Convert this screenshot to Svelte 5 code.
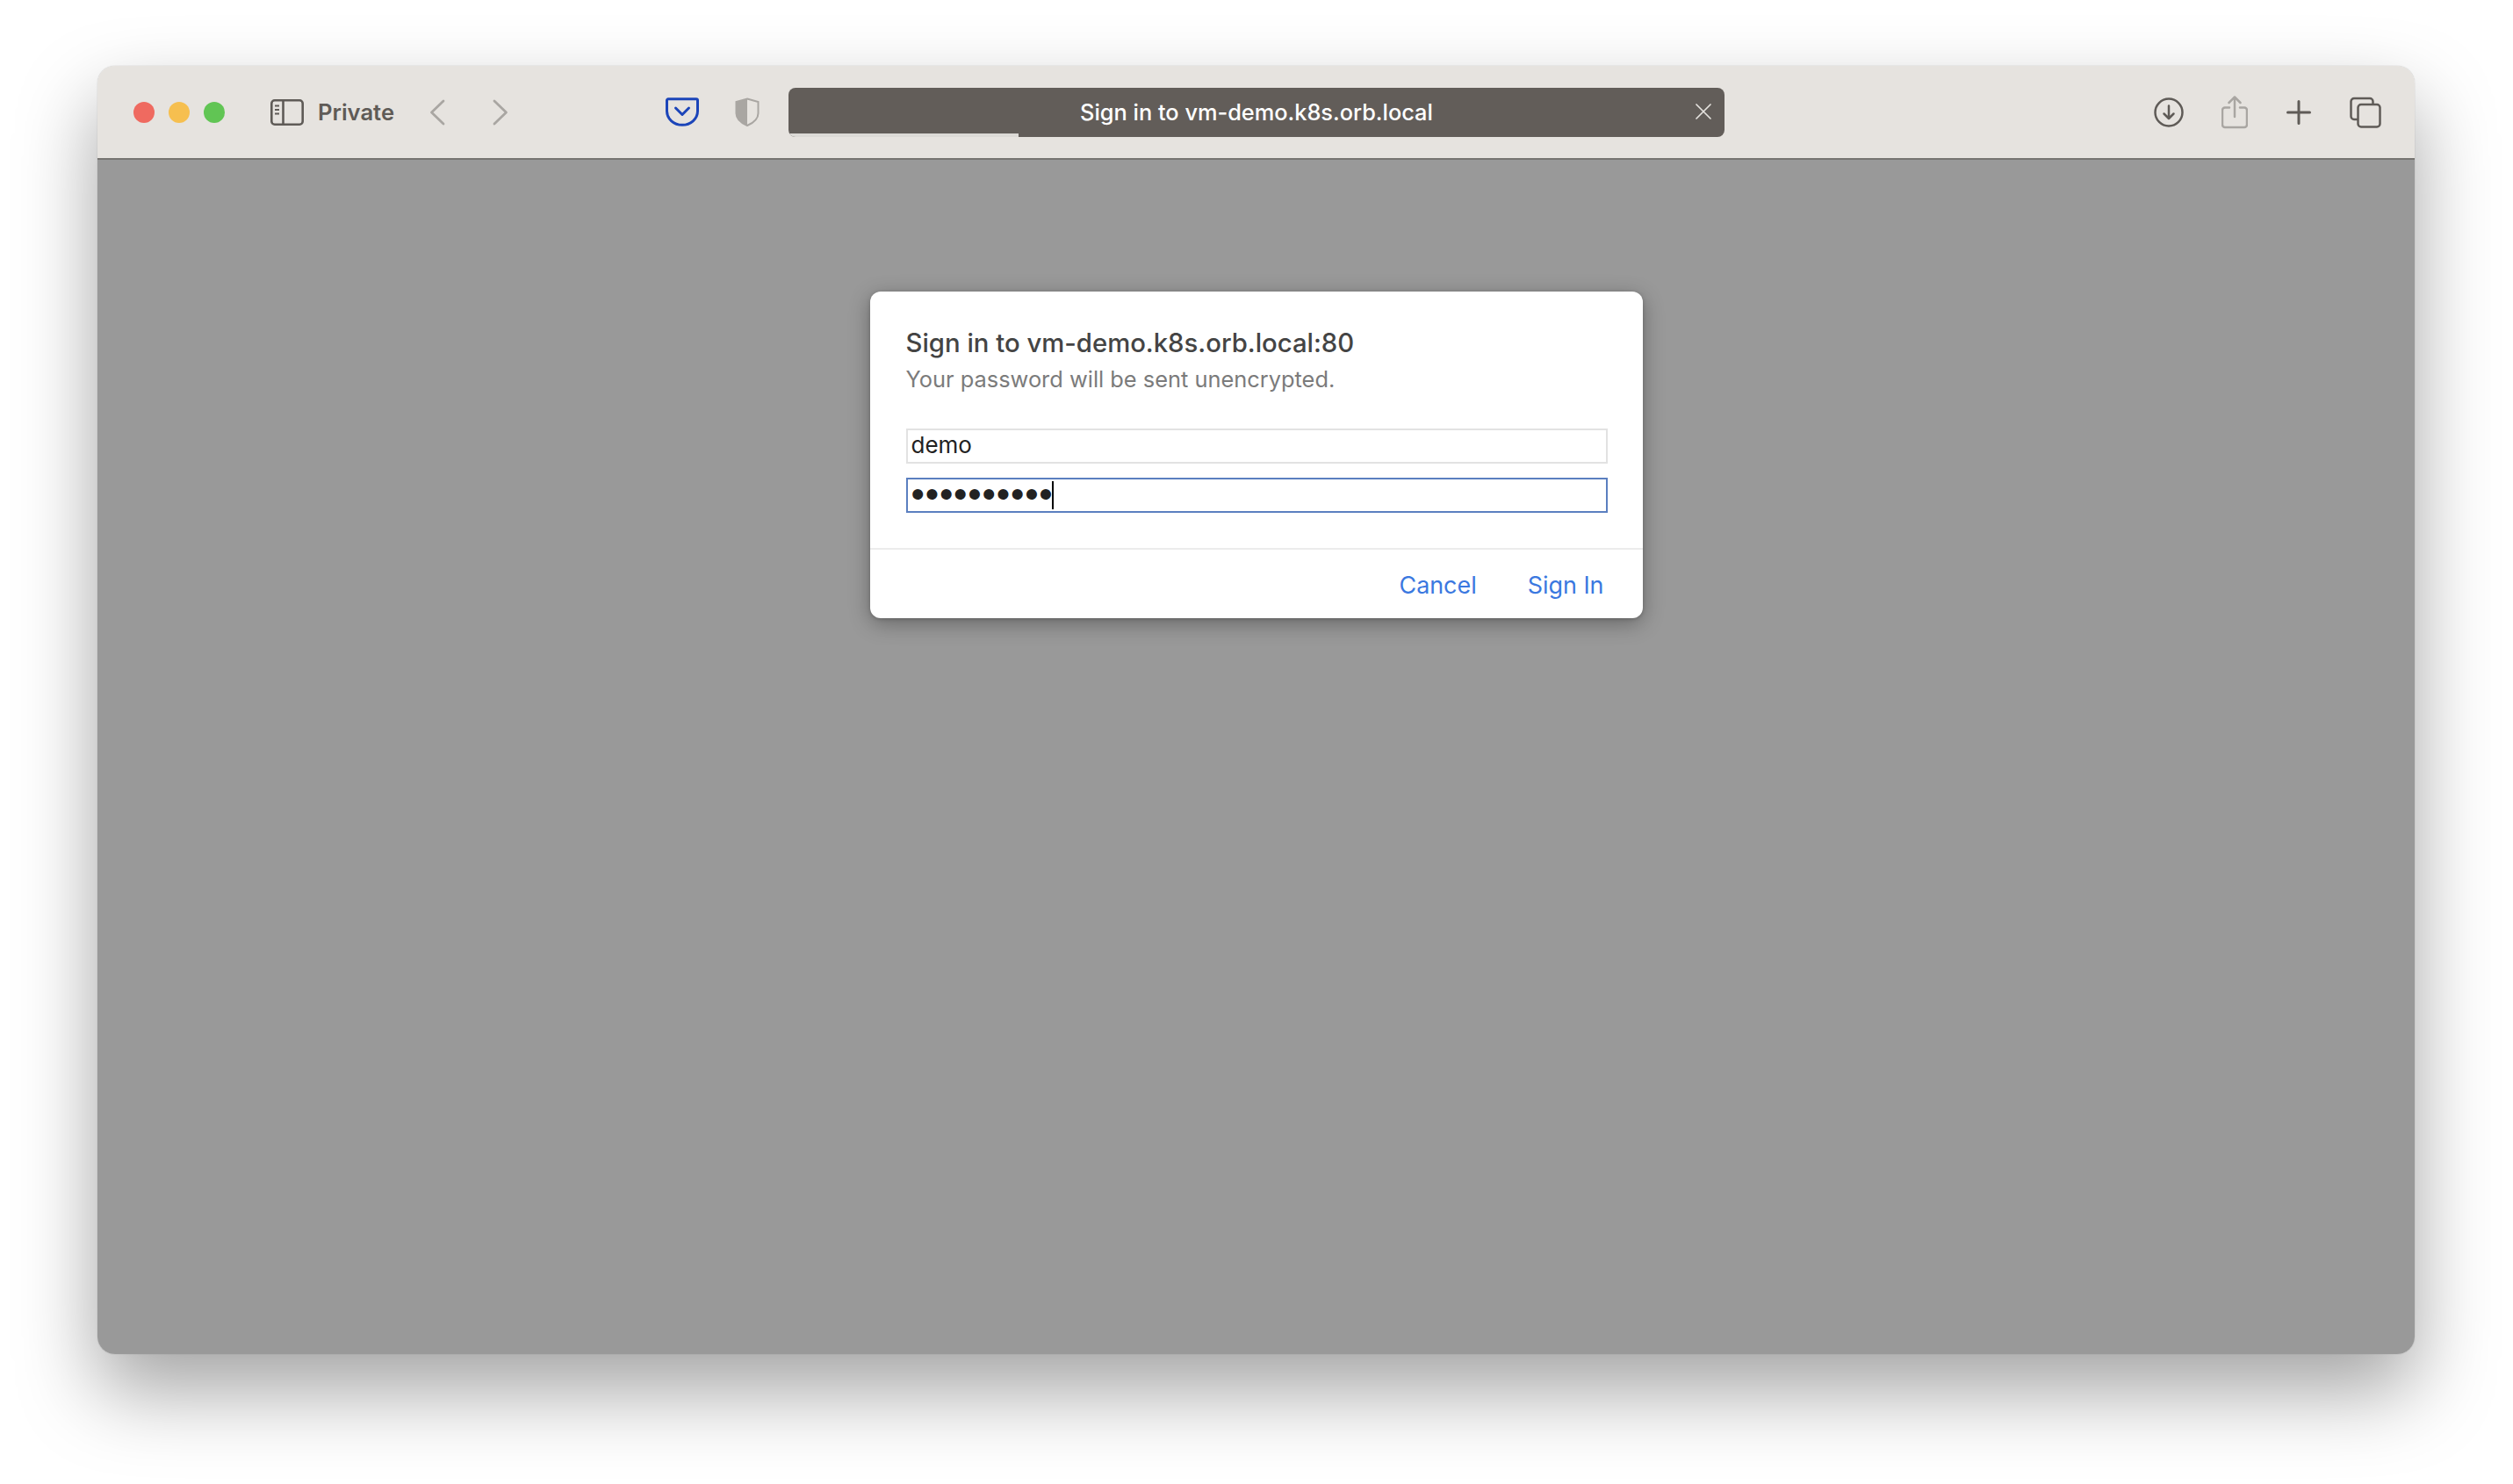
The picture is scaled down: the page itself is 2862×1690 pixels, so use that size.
<script lang="ts">
  const dots = "••••••••••";
</script>

<div class="stage">
  <div class="window">
    <header class="toolbar">
      <div class="lights">
        <span class="light red"></span>
        <span class="light yellow"></span>
        <span class="light green"></span>
      </div>

      <svg class="sidebar-icon" width="38" height="30" viewBox="0 0 38 30" fill="none" stroke="#5f5b57" stroke-width="2.6">
        <rect x="1.3" y="1.3" width="35.4" height="27.4" rx="3.5" />
        <path d="M14.5 1.3v27.4" />
        <path d="M5 7.5h5M5 12h5M5 16.5h5" stroke-width="2" />
      </svg>
      <span class="private">Private</span>

      <svg class="back" width="18" height="30" viewBox="0 0 18 30" fill="none" stroke="#a9a6a2" stroke-width="2.8" stroke-linecap="round" stroke-linejoin="round">
        <path d="M16 2 2.5 15 16 28" />
      </svg>
      <svg class="forward" width="18" height="30" viewBox="0 0 18 30" fill="none" stroke="#a9a6a2" stroke-width="2.8" stroke-linecap="round" stroke-linejoin="round">
        <path d="M2 2l13.500 13L2 28" />
      </svg>

      <svg class="pocket" width="38" height="33" viewBox="0 0 38 33" fill="none" stroke="#1c45b9" stroke-width="3">
        <path d="M3 1.800h32a1.500 1.500 0 0 1 1.500 1.500v12.200C36.500 24.500 28.500 31.300 19 31.300S1.500 24.500 1.500 15.500V3.300A1.500 1.500 0 0 1 3 1.800Z" />
        <path d="m11.500 12 7.500 7.500 7.500-7.500" stroke-linecap="round" stroke-linejoin="round" />
      </svg>
      <svg class="shield" width="28" height="33" viewBox="0 0 28 33" fill="none">
        <path d="M14 1.500 26.500 5v13c0 6.500-5.500 11-12.500 14C7 29 1.500 24.500 1.500 18V5Z" stroke="#a9a6a2" stroke-width="2" />
        <path d="M14 1.500 1.500 5v13C1.500 24.500 7 29 14 32Z" fill="#a9a6a2" />
      </svg>

      <div class="url-bar">
        <span class="url-title">Sign in to vm-demo.k8s.orb.local</span>
        <span class="url-progress"></span>
        <svg class="url-close" width="20" height="20" viewBox="0 0 20 20" stroke="#e6e3df" stroke-width="1.700" stroke-linecap="round">
          <path d="M2 2l16 16M18 2 2 18" />
        </svg>
      </div>

      <svg class="download" width="34" height="34" viewBox="0 0 34 34" fill="none" stroke="#5f5b57" stroke-width="2.500" stroke-linecap="round" stroke-linejoin="round">
        <circle cx="17" cy="17" r="15.500" />
        <path d="M17 9.500v14M11.500 18.500l5.500 5.500 5.500-5.500" />
      </svg>
      <svg class="share" width="30" height="38" viewBox="0 0 30 38" fill="none" stroke="#a9a6a2" stroke-width="2.500" stroke-linecap="round" stroke-linejoin="round">
        <path d="M9 13.500H4a3 3 0 0 0-3 3V33a3 3 0 0 0 3 3h22a3 3 0 0 0 3-3V16.500a3 3 0 0 0-3-3h-5" />
        <path d="M15 24V2M8.500 8 15 1.500 21.500 8" />
      </svg>
      <svg class="plus" width="28" height="28" viewBox="0 0 28 28" stroke="#5f5b57" stroke-width="3" stroke-linecap="round">
        <path d="M14 1.500v25M1.500 14h25" />
      </svg>
      <svg class="tabs" width="36" height="36" viewBox="0 0 36 36" fill="none" stroke="#5f5b57" stroke-width="2.500">
        <rect x="9.500" y="9" width="25" height="25.500" rx="3.500" />
        <path d="M9.500 26H5a3.500 3.500 0 0 1-3.500-3.500v-17A3.500 3.500 0 0 1 5 2h18a3.500 3.500 0 0 1 3.500 3.500V9" />
      </svg>
    </header>

    <main class="content">
      <div class="dialog">
        <div class="dialog-body">
          <div class="dialog-title">Sign in to vm-demo.k8s.orb.local:80</div>
          <div class="dialog-note">Your password will be sent unencrypted.</div>
          <div class="field first">demo</div>
          <div class="field focused">
            <span class="dots">{dots}</span><span class="caret"></span>
          </div>
        </div>
        <div class="dialog-actions">
          <span class="action">Cancel</span>
          <span class="action">Sign In</span>
        </div>
      </div>
    </main>
  </div>
</div>

<style>
  :global(body) {
    margin: 0;
    background: #fff;
  }
  .stage {
    box-sizing: border-box;
    width: 2862px;
    height: 1690px;
    padding: 75px 112px 148px 111px;
    overflow: hidden;
    font-family: Inter, "Liberation Sans", sans-serif;
  }
  .window {
    display: flex;
    flex-direction: column;
    height: 100%;
    border-radius: 20px;
    overflow: hidden;
    box-shadow: 0 0 1px rgba(0, 0, 0, 0.4), 0 42px 90px rgba(0, 0, 0, 0.36);
  }
  .toolbar {
    box-sizing: border-box;
    display: flex;
    align-items: center;
    flex: none;
    height: 107px;
    background: #e6e3df;
    border-bottom: 2px solid #767471;
  }
  .lights {
    display: flex;
    gap: 16px;
    margin-left: 41px;
  }
  .light {
    width: 24px;
    height: 24px;
    border-radius: 50%;
  }
  .red {
    background: #ef6a60;
  }
  .yellow {
    background: #f6bf4f;
  }
  .green {
    background: #61c554;
  }
  .toolbar svg {
    flex: none;
  }
  .sidebar-icon {
    margin-left: 52px;
  }
  .private {
    width: 88px;
    margin-left: 16px;
    font-size: 25.6px;
    font-weight: 600;
    color: #5f5b57;
    white-space: nowrap;
  }
  .back {
    margin-left: 39px;
  }
  .forward {
    margin-left: 54px;
  }
  .pocket {
    margin-left: 179px;
  }
  .shield {
    margin-left: 41px;
  }
  .url-bar {
    position: relative;
    display: flex;
    align-items: center;
    justify-content: center;
    flex: none;
    width: 1066px;
    height: 56px;
    margin-left: 33px;
    overflow: hidden;
    border-radius: 8px;
    background: #625d59;
  }
  .url-title {
    font-size: 25.35px;
    font-weight: 500;
    color: #fff;
    white-space: nowrap;
  }
  .url-progress {
    position: absolute;
    left: 0;
    bottom: 0;
    width: 262px;
    height: 4px;
    background: #dcdad6;
  }
  .url-close {
    position: absolute;
    right: 14px;
    top: 17px;
  }
  .download {
    margin-left: 489px;
  }
  .share {
    margin-left: 43px;
  }
  .plus {
    margin-left: 44px;
  }
  .tabs {
    margin-left: 44px;
  }
  .content {
    flex: 1;
    display: flex;
    justify-content: center;
    align-items: flex-start;
    padding-top: 150px;
    background: #999;
  }
  .dialog {
    box-sizing: border-box;
    width: 880px;
    height: 372px;
    display: flex;
    flex-direction: column;
    border-radius: 12px;
    background: #fff;
    box-shadow: 0 6px 24px rgba(0, 0, 0, 0.32), 0 1px 4px rgba(0, 0, 0, 0.2);
  }
  .dialog-body {
    flex: none;
    height: 294px;
    padding: 0 40px 0 41px;
    box-sizing: border-box;
    border-bottom: 2px solid #ececec;
  }
  .dialog-title {
    margin-top: 41px;
    font-size: 29.3px;
    line-height: 36px;
    font-weight: 500;
    color: #444;
    white-space: nowrap;
  }
  .dialog-note {
    margin-top: 7px;
    font-size: 25.4px;
    line-height: 32px;
    color: #7b7b7b;
    white-space: nowrap;
  }
  .field {
    box-sizing: border-box;
    display: flex;
    align-items: center;
    height: 40px;
    padding-left: 4px;
    border: 2px solid #e2e2e2;
    font-size: 26px;
    line-height: 32px;
    color: #222;
  }
  .first {
    margin-top: 40px;
    padding-bottom: 2px;
  }
  .focused {
    margin-top: 16px;
    border-color: #5b7fc0;
  }
  .dots {
    margin-top: -2px;
    font-family: "Liberation Sans", sans-serif;
    font-size: 44px;
    line-height: 36px;
    letter-spacing: 0.8px;
    color: #222;
  }
  .caret {
    width: 2px;
    height: 32px;
    margin-left: -2px;
    background: #000;
  }
  .dialog-actions {
    flex: 1;
    display: flex;
    align-items: center;
    justify-content: flex-end;
    gap: 58px;
    padding: 1px 44px 0 0;
  }
  .action {
    font-size: 26.9px;
    color: #3a78e0;
    white-space: nowrap;
  }
</style>
